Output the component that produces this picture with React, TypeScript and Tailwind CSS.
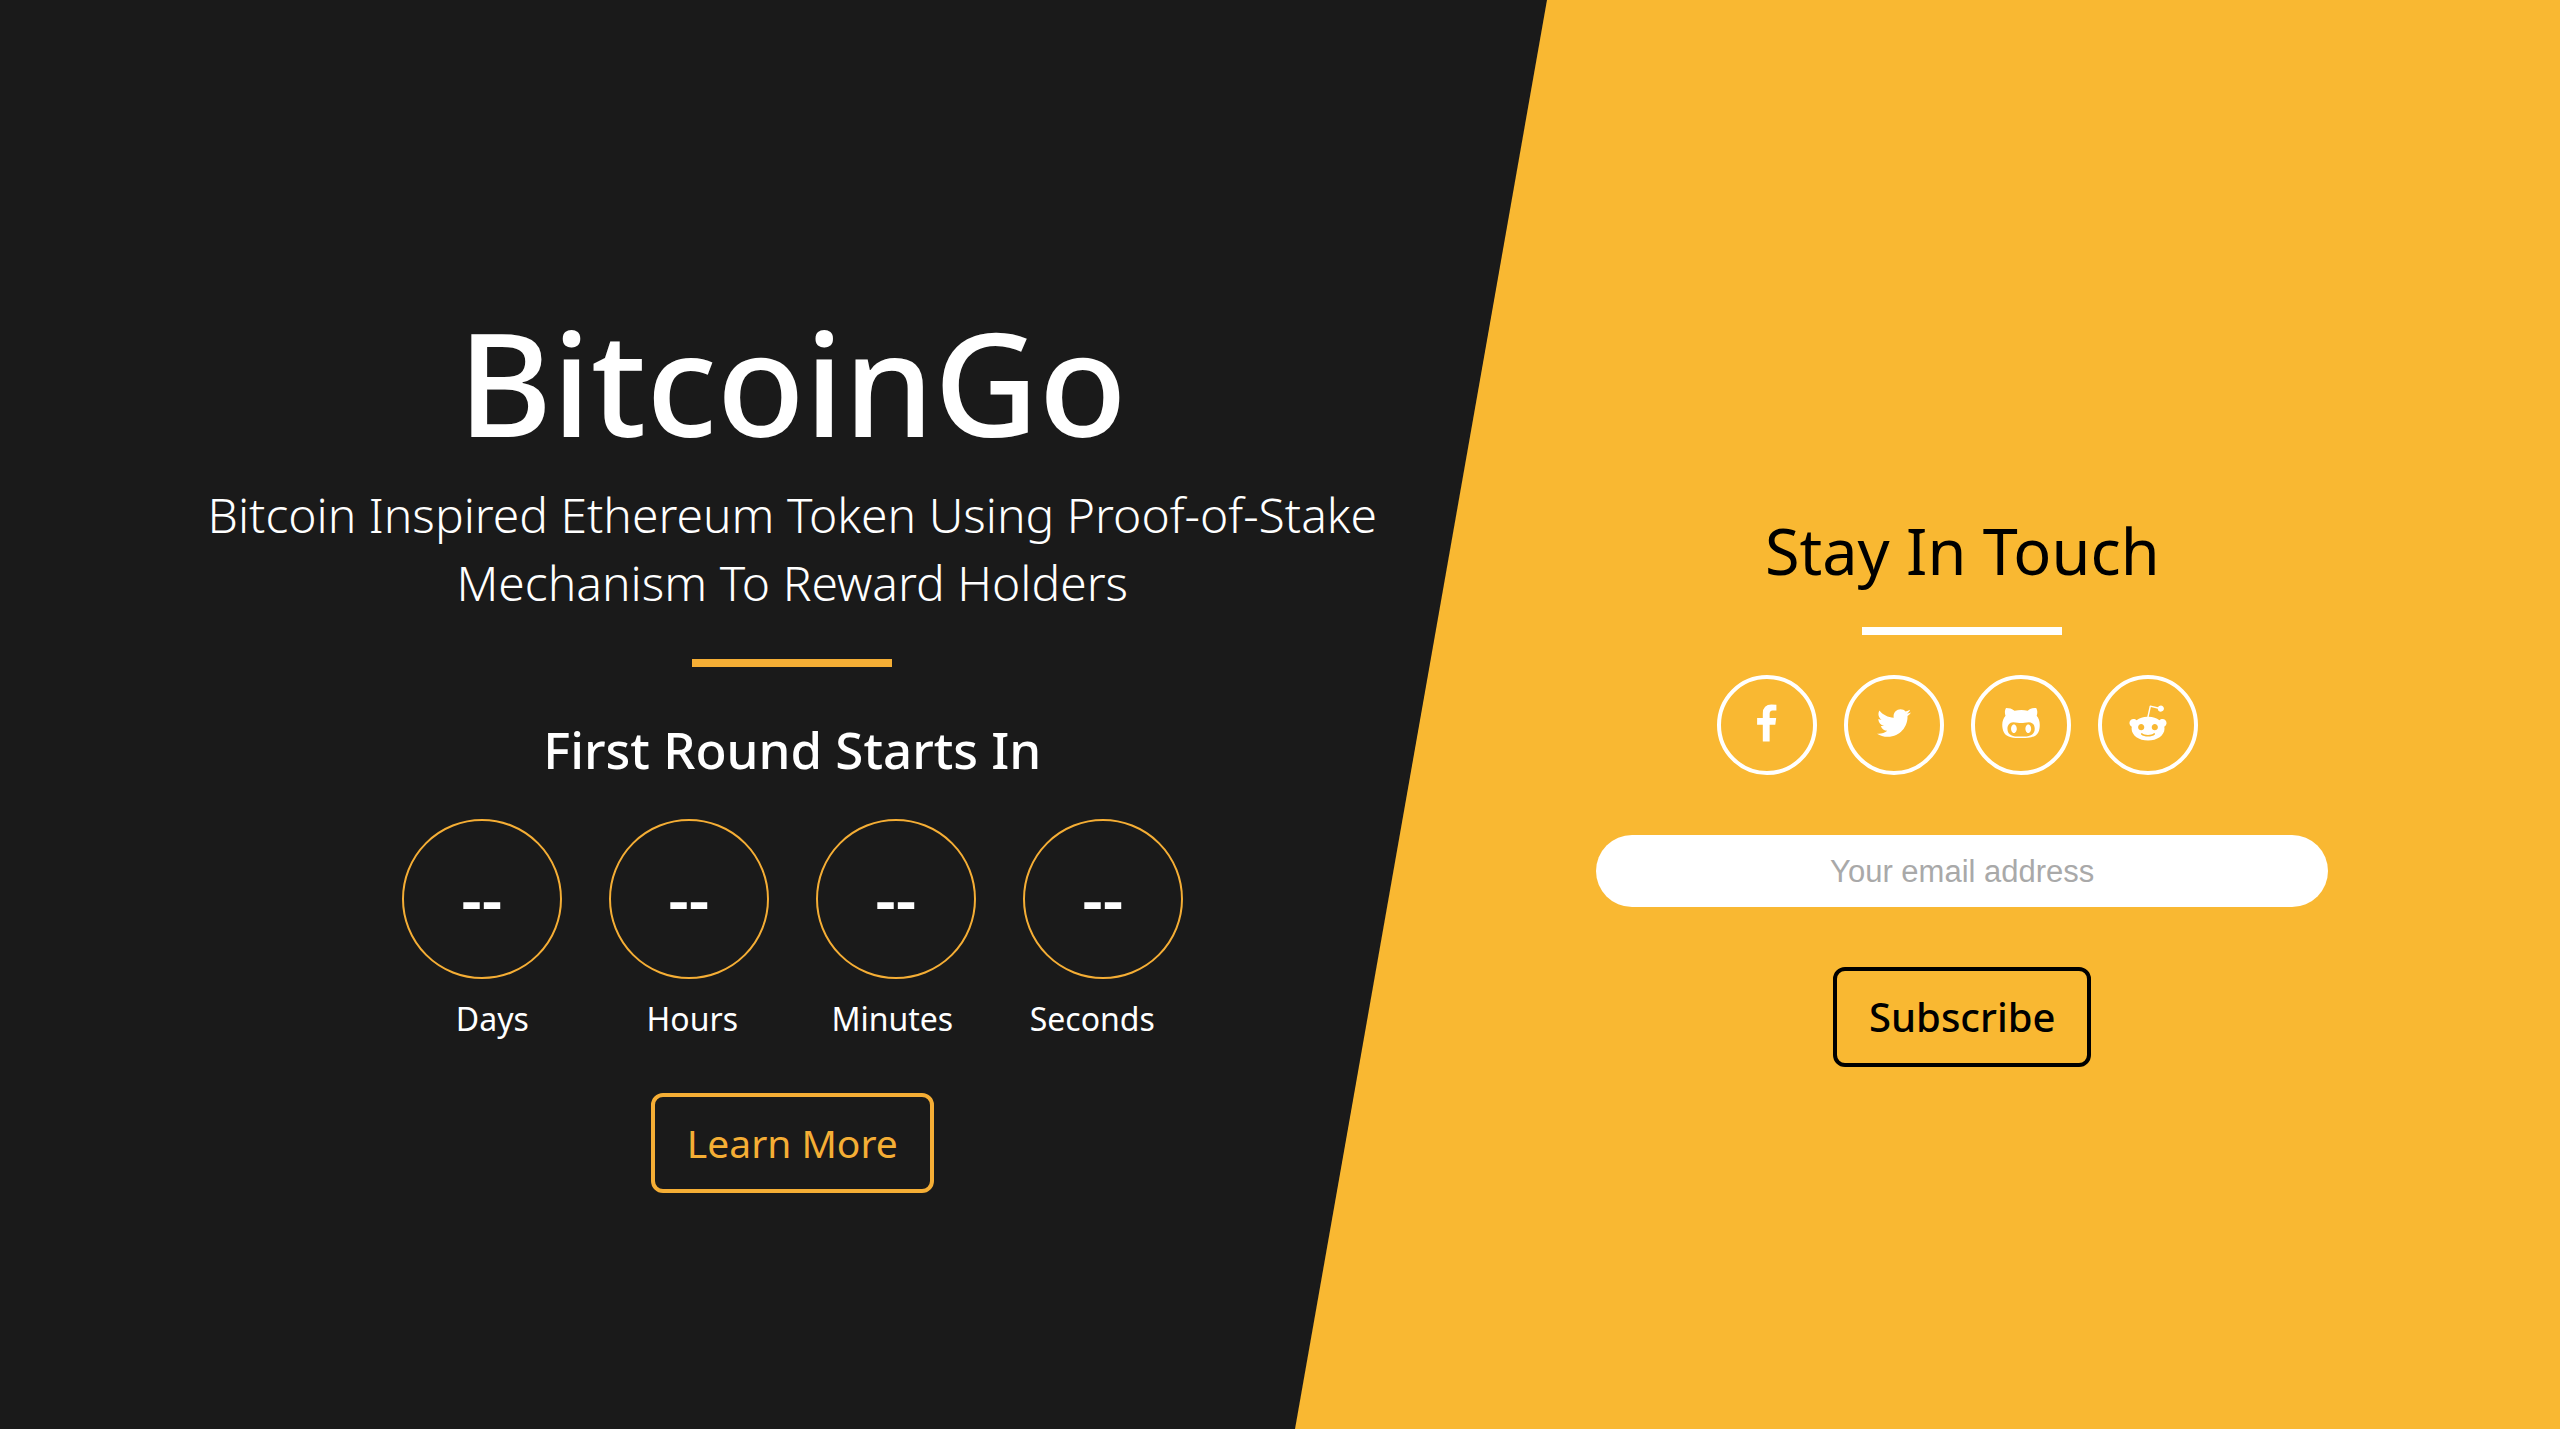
import type { ReactNode } from 'react';
import { FaGithubAlt, FaRedditAlien, FaTwitter } from 'react-icons/fa';

const units = ['Days', 'Hours', 'Minutes', 'Seconds'];

function FacebookIcon() {
  return (
    <svg viewBox="0 0 1024 1792" className="h-10" fill="currentColor" aria-hidden="true">
      <path d="M959 76v264h-157q-86 0-116 36t-30 108v189h293l-39 296h-254v759h-306v-759h-255v-296h255v-218q0-186 104-288.5t277-102.5q147 0 228 12z" />
    </svg>
  );
}

function SocialLink({ label, children }: { label: string; children: ReactNode }) {
  return (
    <a
      href="#"
      aria-label={label}
      className="flex size-[100px] items-center justify-center rounded-full border-4 border-white pb-1 text-white"
    >
      {children}
    </a>
  );
}

function Countdown() {
  return (
    <div className="mt-10 flex flex-col items-center">
      <div className="flex gap-[47px]">
        {units.map((unit) => (
          <div
            key={unit}
            className="flex size-40 items-center justify-center rounded-full border-2 border-[#f5ae35] text-[64px] leading-none font-semibold"
          >
            --
          </div>
        ))}
      </div>
      <div className="mt-5 grid grid-cols-4 text-[32px] leading-10">
        {units.map((unit) => (
          <span key={unit} className="w-[200px] text-center">
            {unit}
          </span>
        ))}
      </div>
    </div>
  );
}

export default function App() {
  return (
    <main className="relative flex min-h-screen overflow-hidden bg-[#1a1a1a] font-['Noto_Sans',sans-serif]">
      <div className="absolute inset-y-0 -right-1/4 left-[55.5%] -skew-x-[10deg] bg-[#f9b832]" />

      <section className="relative flex w-[55.5%] flex-col items-center justify-center pt-[73px] pl-[6.4%] text-center text-white">
        <h1 className="text-[144px] leading-none font-medium">BitcoinGo</h1>
        <p className="mt-7 max-w-[1200px] text-5xl leading-[68px] font-[340]">
          Bitcoin Inspired Ethereum Token Using Proof-of-Stake Mechanism To Reward Holders
        </p>
        <div className="mt-[42px] h-2 w-[200px] bg-[#f5ae35]" />
        <h2 className="mt-[52px] text-[51px] leading-[60px] font-medium">First Round Starts In</h2>
        <Countdown />
        <button
          type="button"
          className="mt-[54px] h-[100px] rounded-xl border-4 border-[#f5ae35] px-8 text-[39px] text-[#f5ae35]"
        >
          Learn More
        </button>
      </section>

      <section className="relative flex flex-1 flex-col items-center justify-center pt-[157px] pr-[2.2%] text-center text-black">
        <h2 className="text-[63px] leading-[64px]">Stay In Touch</h2>
        <div className="mt-11 h-2 w-[200px] bg-white" />
        <nav aria-label="Social media" className="mt-10 flex gap-[27px] pr-2.5">
          <SocialLink label="Facebook">
            <FacebookIcon />
          </SocialLink>
          <SocialLink label="Twitter">
            <FaTwitter className="size-[34px]" />
          </SocialLink>
          <SocialLink label="GitHub">
            <FaGithubAlt className="size-10" />
          </SocialLink>
          <SocialLink label="Reddit">
            <FaRedditAlien className="size-10" />
          </SocialLink>
        </nav>
        <form className="mt-[60px] flex w-full flex-col items-center">
          <input
            type="email"
            aria-label="Your email address"
            placeholder="Your email address"
            className="h-[72px] w-full max-w-[732px] rounded-full bg-white pt-0.5 text-center font-['Liberation_Sans',sans-serif] text-[31px] text-black outline-none placeholder:text-[#a9a9a9]"
          />
          <button
            type="button"
            className="mt-[60px] h-[100px] rounded-xl border-4 border-black px-8 text-[40px] font-medium"
          >
            Subscribe
          </button>
        </form>
      </section>
    </main>
  );
}
